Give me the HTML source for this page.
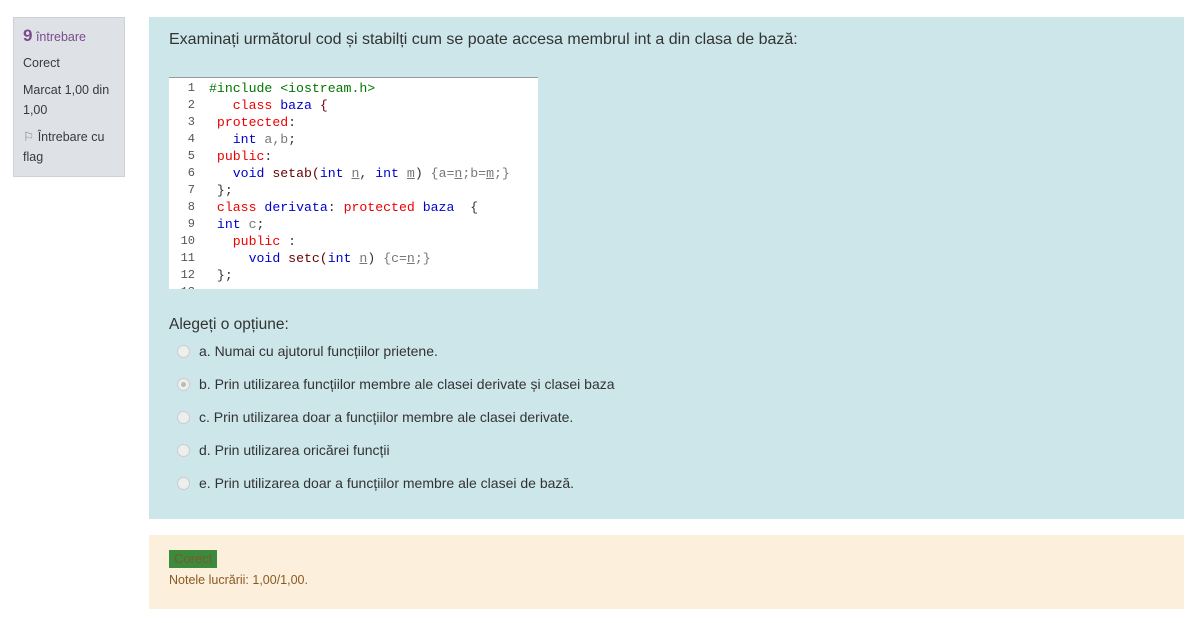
<!DOCTYPE html>
<html><head><meta charset="utf-8"><style>
*{margin:0;padding:0;box-sizing:border-box}
body{width:1197px;height:623px;background:#fff;font-family:"Liberation Sans",Arial,sans-serif;color:#333;position:relative;overflow:hidden}
.info{position:absolute;left:13px;top:17px;width:112px;height:160px;background:#dee2e6;border:1px solid #cdd1d5;padding:8px 9px;font-size:12.5px;line-height:20px;color:#373a3c}
.info .no{color:#7a4b8d;font-size:12.5px}
.info .no b{font-size:17px}
.main{position:absolute;left:149px;top:17px;width:1035px;height:502px;background:#cde6ea}
.q{position:absolute;left:20px;top:14px;font-size:16px;color:#333}
.code{position:absolute;left:20px;top:60px;width:369px;height:212px;background:#fff;border-top:1px solid #999;overflow:hidden;font-family:"Liberation Mono","DejaVu Sans Mono",monospace;font-size:13.2px;line-height:17px;padding-top:2px}
.ln{position:absolute;left:0;width:26px;text-align:right;color:#555;font-size:12px}
.cl{position:absolute;left:40px;white-space:pre}
.r{color:#e00}.b{color:#00c}.g{color:#777}.gr{color:#070}.d{color:#600}
u{color:#777}
.alt{position:absolute;left:20px;top:299px;font-size:15.5px}
.opt{position:absolute;left:28px;font-size:14px;color:#333}
.opt i{display:inline-block;width:13px;height:13px;border-radius:50%;background:#eee;border:1px solid #ccc;vertical-align:-2px;margin-right:9px;position:relative}
.opt i.s::after{content:"";position:absolute;left:3px;top:3px;width:5px;height:5px;border-radius:50%;background:#bbb}
.fb{position:absolute;left:149px;top:535px;width:1035px;height:74px;background:#fcefdc;padding:15px 20px;font-size:12.5px;color:#8a5a23}
.tag{display:inline-block;background:#3c8a3c;color:#7a5a2a;padding:0 5px;line-height:18px;font-size:13px}
</style></head><body>
<div class="info"><div class="no"><b>9</b> întrebare</div><div style="margin-top:6px">Corect</div><div style="margin-top:7px">Marcat 1,00 din 1,00</div><div style="margin-top:7px"><span style="color:#888">⚐</span> Întrebare cu flag</div></div>
<div class="main">
<div class="q">Examinați următorul cod și stabilți cum se poate accesa membrul int a din clasa de bază:</div>
<div class="code">
<div class="ln" style="top:2px">1</div><div class="cl gr" style="top:2px">#include &lt;iostream.h&gt;</div>
<div class="ln" style="top:19px">2</div><div class="cl" style="top:19px">   <span class="r">class</span> <span class="b">baza</span> <span class="d">{</span></div>
<div class="ln" style="top:36px">3</div><div class="cl" style="top:36px"> <span class="r">protected</span>:</div>
<div class="ln" style="top:53px">4</div><div class="cl" style="top:53px">   <span class="b">int</span> <span class="g">a,b</span>;</div>
<div class="ln" style="top:70px">5</div><div class="cl" style="top:70px"> <span class="r">public</span>:</div>
<div class="ln" style="top:87px">6</div><div class="cl" style="top:87px">   <span class="b">void</span> <span class="d">setab(</span><span class="b">int</span> <u>n</u>, <span class="b">int</span> <u>m</u>) <span class="g">{a=<u>n</u>;b=<u>m</u>;}</span></div>
<div class="ln" style="top:104px">7</div><div class="cl" style="top:104px"> };</div>
<div class="ln" style="top:121px">8</div><div class="cl" style="top:121px"> <span class="r">class</span> <span class="b">derivata</span>: <span class="r">protected</span> <span class="b">baza</span>  {</div>
<div class="ln" style="top:138px">9</div><div class="cl" style="top:138px"> <span class="b">int</span> <span class="g">c</span>;</div>
<div class="ln" style="top:155px">10</div><div class="cl" style="top:155px">   <span class="r">public</span> :</div>
<div class="ln" style="top:172px">11</div><div class="cl" style="top:172px">     <span class="b">void</span> <span class="d">setc(</span><span class="b">int</span> <u>n</u>) <span class="g">{c=<u>n</u>;}</span></div>
<div class="ln" style="top:189px">12</div><div class="cl" style="top:189px"> };</div>
<div class="ln" style="top:206px">13</div>
</div>
<div class="alt">Alegeți o opțiune:</div>
<div class="opt" style="top:326px"><i></i>a. Numai cu ajutorul funcțiilor prietene.</div>
<div class="opt" style="top:359px"><i class="s"></i>b. Prin utilizarea funcțiilor membre ale clasei derivate și clasei baza</div>
<div class="opt" style="top:392px"><i></i>c. Prin utilizarea doar a funcțiilor membre ale clasei derivate.</div>
<div class="opt" style="top:425px"><i></i>d. Prin utilizarea oricărei funcții</div>
<div class="opt" style="top:458px"><i></i>e. Prin utilizarea doar a funcțiilor membre ale clasei de bază.</div>
</div>
<div class="fb"><span class="tag">Corect</span><div style="margin-top:5px">Notele lucrării: 1,00/1,00.</div></div>
</body></html>
